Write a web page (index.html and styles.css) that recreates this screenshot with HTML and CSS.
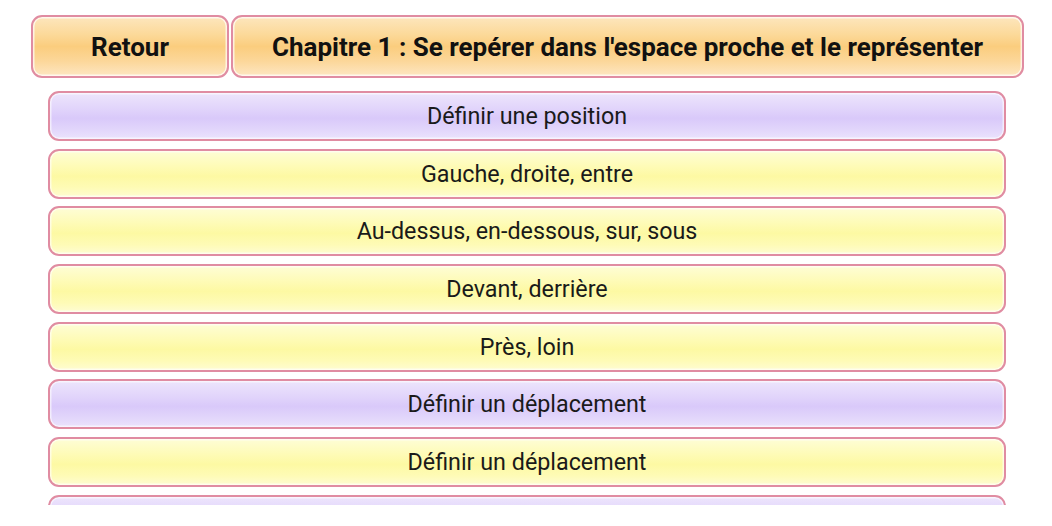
FILE: index.html
```html
<!DOCTYPE html>
<html lang="fr">
<head>
<meta charset="utf-8">
<title>Chapitre 1</title>
<link rel="stylesheet" href="styles.css">
</head>
<body>
<div class="page">
  <header class="top">
    <div class="btn btn-back">Retour</div>
    <div class="btn btn-title">Chapitre 1 : Se repérer dans l'espace proche et le représenter</div>
  </header>
  <div class="list">
    <div class="item violet">Définir une position</div>
    <div class="item yellow">Gauche, droite, entre</div>
    <div class="item yellow">Au-dessus, en-dessous, sur, sous</div>
    <div class="item yellow">Devant, derrière</div>
    <div class="item yellow">Près, loin</div>
    <div class="item violet">Définir un déplacement</div>
    <div class="item yellow">Définir un déplacement</div>
    <div class="item violet"></div>
  </div>
</div>
</body>
</html>
```

FILE: styles.css
```css
html, body {
  margin: 0;
  padding: 0;
  background: #ffffff;
}
.page {
  width: 1052px;
  height: 526px;
  overflow: hidden;
  font-family: Roboto, "Noto Sans", "Liberation Sans", sans-serif;
}
.top {
  display: flex;
  gap: 2px;
  padding: 15px 0 0 31px;
  height: 63px;
}
.btn {
  box-sizing: border-box;
  height: 63px;
  display: flex;
  align-items: center;
  justify-content: center;
  border: 2px solid #e08ca2;
  border-radius: 11px;
  box-shadow: inset 0 0 0 1.5px rgba(255,255,255,0.7);
  background: linear-gradient(to bottom, #fde6bd 0%, #fcd999 30%, #fbcd7e 50%, #fcd79a 75%, #fde6c2 100%);
  font-weight: 700;
  font-size: 26px;
  color: #111;
}
.btn-back {
  width: 198px;
}
.btn-title {
  width: 793px;
}
.list {
  margin: 13px 0 0 48px;
  width: 958px;
  height: 414px;
  overflow: hidden;
  display: flex;
  flex-direction: column;
  gap: 7.7px;
}
.item {
  box-sizing: border-box;
  flex: 0 0 50px;
  height: 50px;
  display: flex;
  align-items: center;
  justify-content: center;
  border: 2px solid #e08ca2;
  border-radius: 11px;
  box-shadow: inset 0 0 0 1.5px rgba(255,255,255,0.6);
  font-size: 23.3px;
  color: #1a1a1a;
}
.violet {
  background: linear-gradient(to bottom, #ede5fc 0%, #e1d4fb 35%, #d9c9fa 55%, #e2d6fb 80%, #ebe3fc 100%);
}
.yellow {
  background: linear-gradient(to bottom, #fefdd6 0%, #fefbb5 35%, #fdf9a3 55%, #fefbb6 80%, #fefcd2 100%);
}
```
